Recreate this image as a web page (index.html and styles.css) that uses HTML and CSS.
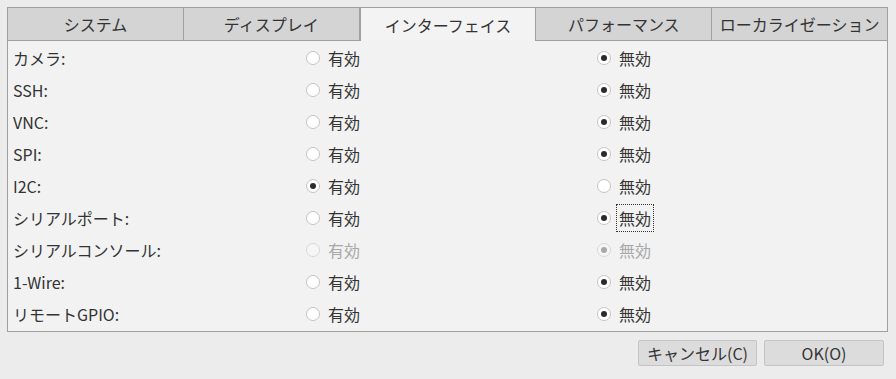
FILE: index.html
```html
<!DOCTYPE html>
<html lang="ja">
  <head>
    <meta charset="UTF-8" />
    <title>Raspberry Pi の設定</title>
    <link rel="stylesheet" href="styles.css">
  </head>
  <body>
    <div class="dialog">
      <div class="tabs">
        <div class="tab">システム</div>
        <div class="tab">ディスプレイ</div>
        <div class="tab active">インターフェイス</div>
        <div class="tab">パフォーマンス</div>
        <div class="tab">ローカライゼーション</div>
      </div>

      <div class="panel">
        <div class="row">
          <span class="label">カメラ:</span>
          <span class="radio"><i class="dot"></i>有効</span>
          <span class="radio"><i class="dot on"></i>無効</span>
        </div>
        <div class="row">
          <span class="label">SSH:</span>
          <span class="radio"><i class="dot"></i>有効</span>
          <span class="radio"><i class="dot on"></i>無効</span>
        </div>
        <div class="row">
          <span class="label">VNC:</span>
          <span class="radio"><i class="dot"></i>有効</span>
          <span class="radio"><i class="dot on"></i>無効</span>
        </div>
        <div class="row">
          <span class="label">SPI:</span>
          <span class="radio"><i class="dot"></i>有効</span>
          <span class="radio"><i class="dot on"></i>無効</span>
        </div>
        <div class="row">
          <span class="label">I2C:</span>
          <span class="radio"><i class="dot on"></i>有効</span>
          <span class="radio"><i class="dot"></i>無効</span>
        </div>
        <div class="row">
          <span class="label">シリアルポート:</span>
          <span class="radio"><i class="dot"></i>有効</span>
          <span class="radio"><i class="dot on"></i><span class="focus">無効</span></span>
        </div>
        <div class="row disabled">
          <span class="label">シリアルコンソール:</span>
          <span class="radio"><i class="dot"></i>有効</span>
          <span class="radio"><i class="dot on"></i>無効</span>
        </div>
        <div class="row">
          <span class="label">1-Wire:</span>
          <span class="radio"><i class="dot"></i>有効</span>
          <span class="radio"><i class="dot on"></i>無効</span>
        </div>
        <div class="row">
          <span class="label">リモートGPIO:</span>
          <span class="radio"><i class="dot"></i>有効</span>
          <span class="radio"><i class="dot on"></i>無効</span>
        </div>
      </div>

      <div class="buttons">
        <button type="button">キャンセル(C)</button>
        <button type="button" class="ok">OK(O)</button>
      </div>
    </div>
  </body>
</html>
```

FILE: styles.css
```css
body {
  margin: 0;
  background-color: #ececec;
  font-family: "Noto Sans CJK JP", "Noto Sans", sans-serif;
  font-size: 16px;
  color: #333;
}

.dialog {
  padding: 7px 8px 0 7px;
}

.tabs {
  display: flex;
  height: 34px;
  box-sizing: border-box;
  border-bottom: 1px solid #a0a0a0;
}

.tab {
  flex: 1;
  display: flex;
  align-items: center;
  justify-content: center;
  background-color: #d4d4d4;
  border: 1px solid #a0a0a0;
  border-bottom: none;
  border-left: none;
}

.tab:first-child {
  border-left: 1px solid #a0a0a0;
}

.tab.active {
  background-color: #f3f3f3;
  margin-bottom: -1px;
  border-left: 1px solid #a0a0a0;
  border-right: 1px solid #a0a0a0;
}

.tab.active + .tab {
  border-left: none;
}

.panel {
  background-color: #f2f2f2;
  border: 1px solid #a0a0a0;
  border-top: none;
  height: 291px;
  box-sizing: border-box;
  padding-top: 1px;
}

.row {
  display: grid;
  grid-template-columns: 293px 291px 1fr;
  align-items: center;
  height: 32px;
  padding-left: 5px;
}

.radio {
  display: flex;
  align-items: center;
  gap: 8px;
}

.dot {
  flex: none;
  display: inline-block;
  width: 14px;
  height: 14px;
  box-sizing: border-box;
  border: 1px solid #c4c4c4;
  border-radius: 50%;
  background-color: #fff;
  position: relative;
}

.dot.on::after {
  content: "";
  position: absolute;
  left: 3px;
  top: 3px;
  width: 6px;
  height: 6px;
  border-radius: 50%;
  background-color: #2b2b2b;
}

.focus {
  outline: 1px dotted #333;
  outline-offset: 1px;
  padding: 0 1px;
  margin-left: -1px;
}

.disabled .radio {
  color: #a8a8a8;
}

.disabled .dot {
  border-color: #d8d8d8;
  background-color: #f6f6f6;
}

.disabled .dot.on::after {
  background-color: #a8a8a8;
}

.buttons {
  display: flex;
  justify-content: flex-end;
  gap: 7px;
  padding: 8px 4px 0 0;
}

button {
  font-family: inherit;
  font-size: 16px;
  color: #333;
  background-color: #dcdcdc;
  border: 1px solid #c4c4c4;
  border-radius: 2px;
  height: 26px;
  width: 119px;
  padding: 0;
}

button.ok {
  width: 120px;
}
```
